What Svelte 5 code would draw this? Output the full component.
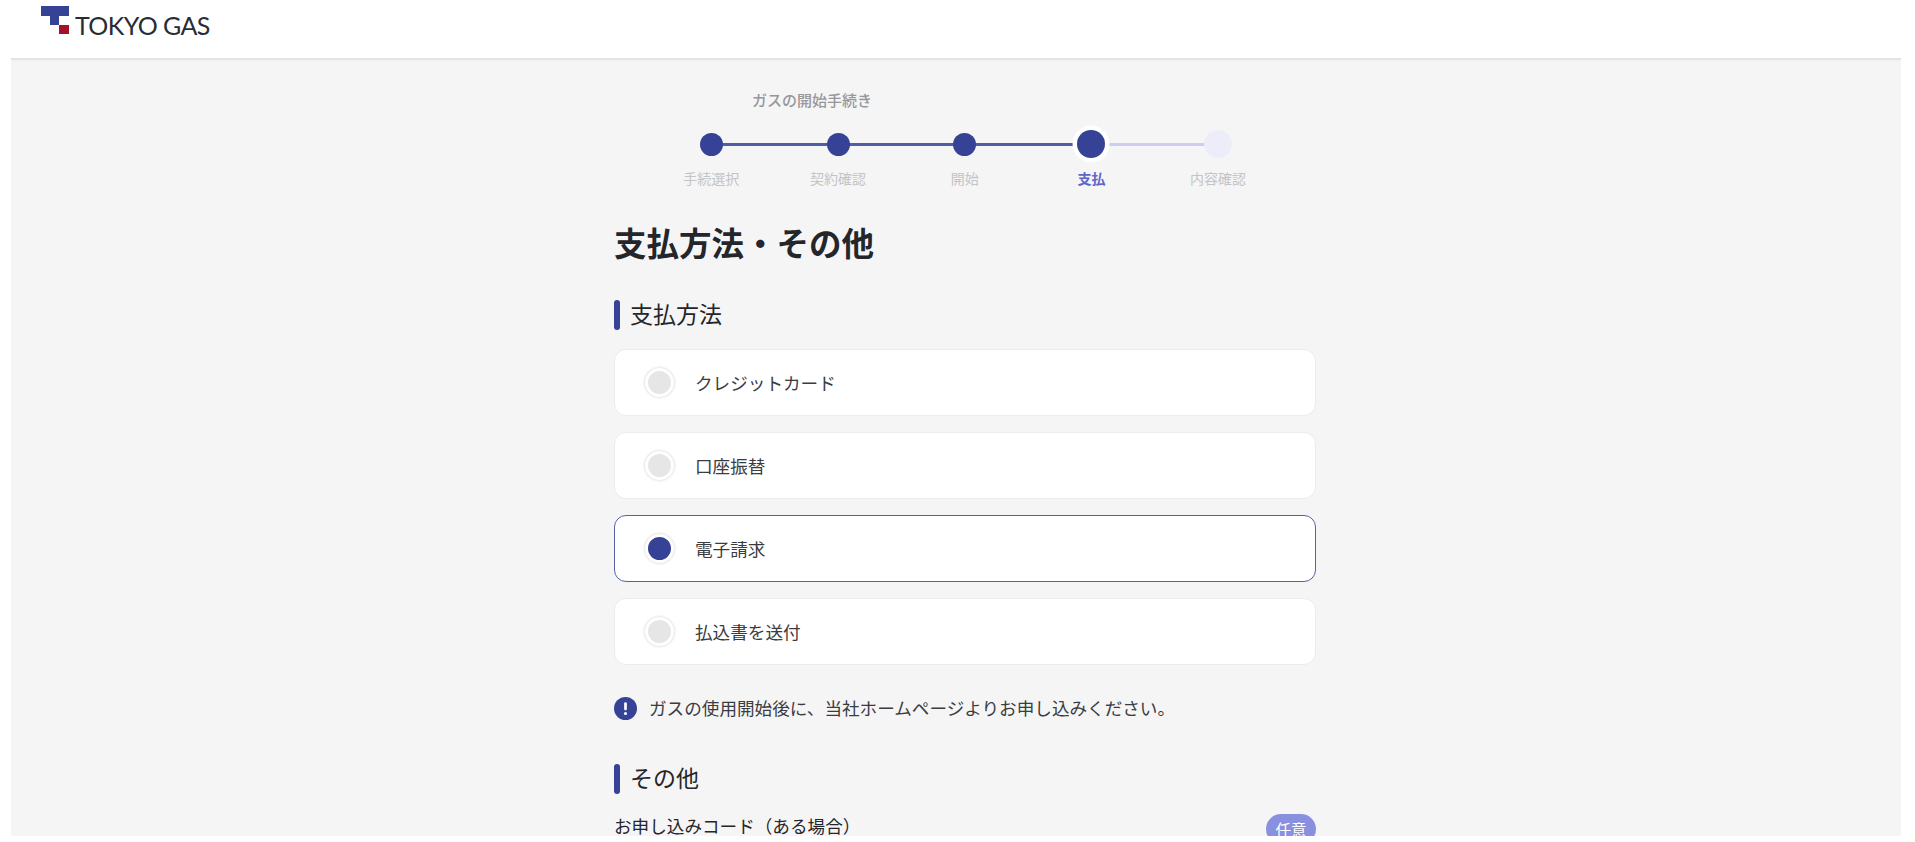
<script>
  const steps = [
    { label: '手続選択', state: 'done' },
    { label: '契約確認', state: 'done' },
    { label: '開始', state: 'done' },
    { label: '支払', state: 'current' },
    { label: '内容確認', state: 'todo' }
  ];
  const methods = [
    { label: 'クレジットカード', selected: false },
    { label: '口座振替', selected: false },
    { label: '電子請求', selected: true },
    { label: '払込書を送付', selected: false }
  ];
</script>

<div class="page">
  <header class="top">
    <div class="logo">
      <svg class="mark" width="28" height="28" viewBox="0 0 28 28" aria-hidden="true">
        <path d="M0 0H28V10H18V19H9V10H0Z" fill="#354295" />
        <rect x="18" y="19" width="10" height="9" fill="#a80f2c" />
      </svg>
      <span class="wordmark">TOKYO GAS</span>
    </div>
  </header>

  <main class="body">
    <div class="column">
      <p class="flow-title">ガスの開始手続き</p>
      <ol class="steps">
        {#each steps as step}
          <li class="step {step.state}">
            <span class="dot-wrap"><span class="dot"></span></span>
            <span class="step-label">{step.label}</span>
          </li>
        {/each}
      </ol>

      <h1>支払方法・その他</h1>

      <h2>支払方法</h2>
      <div class="methods">
        {#each methods as m}
          <label class="method" class:selected={m.selected}>
            <span class="radio"></span>
            <span>{m.label}</span>
          </label>
        {/each}
      </div>

      <p class="note">
        <svg width="23" height="23" viewBox="0 0 24 24" aria-hidden="true">
          <circle cx="12" cy="12" r="12" fill="#354295" />
          <rect x="10.6" y="5.5" width="2.8" height="8.5" rx="1.4" fill="#fff" />
          <circle cx="12" cy="17.2" r="1.6" fill="#fff" />
        </svg>
        ガスの使用開始後に、当社ホームページよりお申し込みください。
      </p>

      <h2 class="other">その他</h2>
      <div class="field-head">
        <span>お申し込みコード（ある場合）</span>
        <span class="badge">任意</span>
      </div>
    </div>
  </main>
</div>

<style>
  :global(body) {
    margin: 0;
    background: #fff;
    font-family: "Noto Sans CJK JP", "Noto Sans", sans-serif;
    color: #24262b;
  }

  .page {
    height: 842px;
    overflow: hidden;
  }

  .top {
    height: 58px;
  }

  .logo {
    display: flex;
    gap: 6px;
    padding: 6px 0 0 41px;
  }

  .wordmark {
    font-family: Lato, sans-serif;
    font-size: 25px;
    line-height: 30px;
    letter-spacing: -0.6px;
    margin-top: 4px;
    color: #2a2c33;
    white-space: nowrap;
  }

  .body {
    margin: 0 14px 0 11px;
    height: 778px;
    overflow: hidden;
    padding-left: 603px;
    background: #f5f5f5;
    box-shadow: inset 0 3px 2px -1px #e2e2e2;
    box-sizing: border-box;
  }

  .column {
    width: 702px;
    padding-top: 32px;
  }

  .flow-title {
    margin: 0 0 0 138px;
    font-size: 15px;
    line-height: 20px;
    font-weight: 500;
    color: #97979c;
  }

  .steps {
    list-style: none;
    display: flex;
    margin: 20px 0 0 34px;
    padding: 0;
  }

  .step {
    position: relative;
    width: 126.7px;
    display: flex;
    flex-direction: column;
    align-items: center;
    gap: 11px;
  }

  .step:not(:last-child)::after {
    content: "";
    position: absolute;
    top: 13px;
    left: 50%;
    width: 100%;
    height: 3px;
    background: #4f5ca8;
  }

  .step.current::after {
    background: #ccccf5;
  }

  .dot-wrap {
    position: relative;
    z-index: 1;
    display: flex;
    align-items: center;
    justify-content: center;
    height: 28px;
  }

  .dot {
    width: 23px;
    height: 23px;
    border-radius: 50%;
    background: #354295;
  }

  .current .dot {
    width: 28px;
    height: 28px;
    box-shadow: 0 0 0 4.5px #fff;
  }

  .todo .dot {
    width: 28px;
    height: 28px;
    background: #ededfa;
  }

  .step-label {
    font-size: 14px;
    line-height: 18px;
    color: #c4c4c6;
    white-space: nowrap;
  }

  .current .step-label {
    color: #5c68c8;
    font-weight: 700;
  }

  h1 {
    margin: 32px 0 0;
    font-size: 32.5px;
    line-height: 46px;
    font-weight: 700;
  }

  h2 {
    margin: 35px 0 0;
    padding-left: 16px;
    position: relative;
    font-size: 23px;
    line-height: 26px;
    font-weight: 400;
  }

  h2::before {
    content: "";
    position: absolute;
    left: 0;
    top: 0;
    width: 6px;
    height: 30px;
    border-radius: 3px;
    background: #354295;
  }

  .methods {
    display: flex;
    flex-direction: column;
    gap: 16px;
    margin-top: 23px;
  }

  .method {
    display: flex;
    align-items: center;
    gap: 21px;
    height: 67px;
    box-sizing: border-box;
    padding-left: 30px;
    background: #fff;
    border: 1px solid #ececec;
    border-radius: 12px;
    font-size: 17.6px;
    color: #3a3c42;
  }

  .method.selected {
    border-color: #5561a8;
  }

  .radio {
    width: 23px;
    height: 23px;
    border: 3.5px solid #fff;
    border-radius: 50%;
    background: #e6e6e6;
    box-shadow: 0 0 3px rgba(0, 0, 0, 0.22);
  }

  .selected .radio {
    background: #354295;
  }

  .note {
    display: flex;
    align-items: center;
    gap: 12px;
    margin: 31px 0 0;
    font-size: 17.6px;
    line-height: 24px;
    color: #3a3c42;
  }

  .other {
    margin-top: 44px;
  }

  .field-head {
    display: flex;
    justify-content: space-between;
    align-items: flex-start;
    margin-top: 23px;
    font-size: 17.6px;
    line-height: 26px;
    font-weight: 400;
  }

  .badge {
    display: inline-flex;
    align-items: center;
    justify-content: center;
    width: 50px;
    height: 30px;
    margin-top: 1px;
    border-radius: 15px;
    background: #8a90e0;
    color: #fff;
    font-size: 15.5px;
  }
</style>
